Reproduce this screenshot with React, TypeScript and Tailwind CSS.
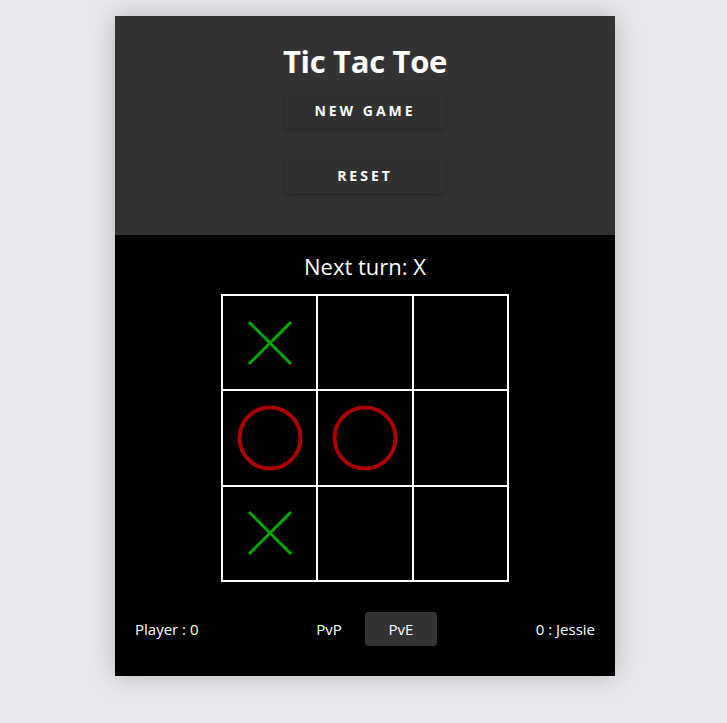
import React from "react";

type Mark = "X" | "O" | null;

const board: Mark[] = ["X", null, null, "O", "O", null, "X", null, null];

function XMark() {
  return (
    <svg width="66" height="66" viewBox="0 0 66 66">
      <line x1="12" y1="12" x2="54" y2="54" stroke="#00aa00" strokeWidth="3" />
      <line x1="54" y1="12" x2="12" y2="54" stroke="#00aa00" strokeWidth="3" />
    </svg>
  );
}

function OMark() {
  return (
    <svg width="66" height="66" viewBox="0 0 66 66">
      <circle cx="33" cy="33" r="30.5" fill="none" stroke="#aa0000" strokeWidth="4" />
    </svg>
  );
}

export default function App() {
  return (
    <div
      className="min-h-[723px] w-full bg-[#e8e8ed] flex justify-center pt-[16px] pl-[3px]"
      style={{ fontFamily: '"Open Sans", "Noto Sans", sans-serif' }}
    >
      <div className="w-[500px] h-[660px] flex flex-col shadow-[0_0_24px_rgba(0,0,0,0.22)]">
        <div className="bg-[#333333] h-[219px] flex flex-col items-center pt-[25px]">
          <h1 className="text-white font-bold text-[31px] leading-[40px] tracking-[-0.3px]">
            Tic Tac Toe
          </h1>
          <button className="mt-[12px] w-[160px] h-[35px] bg-[#313131] text-white font-bold text-[14px] tracking-[3px] shadow-[0_2px_6px_rgba(0,0,0,0.25)]">
            NEW GAME
          </button>
          <button className="mt-[30px] w-[160px] h-[35px] bg-[#313131] text-white font-bold text-[14px] tracking-[3px] shadow-[0_2px_6px_rgba(0,0,0,0.25)]">
            RESET
          </button>
        </div>
        <div className="bg-black flex-1 flex flex-col items-center pt-[15px]">
          <div className="text-white text-[22px] leading-[32px]">Next turn: X</div>
          <div className="mt-[12px] w-[288px] h-[288px] bg-white p-[2px] grid grid-cols-3 grid-rows-3 gap-[2px]">
            {board.map((m, i) => (
              <div key={i} className="bg-black flex items-center justify-center">
                {m === "X" ? <XMark /> : m === "O" ? <OMark /> : null}
              </div>
            ))}
          </div>
          <div className="mt-[30px] w-full px-[20px] flex items-center text-white text-[15px]">
            <div className="flex-1 text-left">Player : 0</div>
            <div className="flex">
              <button className="w-[72px] h-[34px] rounded-[4px] text-white">PvP</button>
              <button className="w-[72px] h-[34px] rounded-[4px] bg-[#333333] text-white">PvE</button>
            </div>
            <div className="flex-1 text-right">0 : Jessie</div>
          </div>
        </div>
      </div>
    </div>
  );
}
